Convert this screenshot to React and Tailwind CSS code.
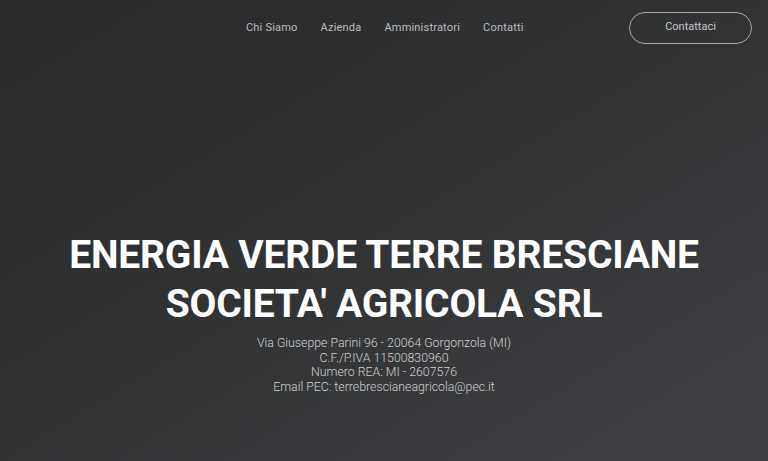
export default function App() {
  const links = ["Chi Siamo", "Azienda", "Amministratori", "Contatti"];

  return (
    <div
      className="flex h-[461px] w-[768px] flex-col overflow-hidden bg-gradient-to-br from-[#28292b] via-[#323335] to-[#404144] text-white"
      style={{ fontFamily: "Roboto, 'Liberation Sans', sans-serif" }}
    >
      <header className="flex h-[55px] items-center pl-[246px] pr-4">
        <nav className="flex gap-[23px] text-[11px] tracking-[0.2px] text-[#bdbdbd]">
          {links.map((link) => (
            <a key={link} href="#" className="leading-none">
              {link}
            </a>
          ))}
        </nav>
        <button
          type="button"
          className="ml-auto flex h-[32px] w-[123px] items-center justify-center rounded-full border border-[#a9a9a9] text-[11px] text-[#c4c4c4]"
        >
          Contattaci
        </button>
      </header>

      <main className="flex flex-1 flex-col items-center pt-[176px]">
        <h1 className="text-center text-[39px] font-bold leading-[49px] tracking-[-0.2px] text-white">
          ENERGIA VERDE TERRE BRESCIANE
          <br />
          SOCIETA' AGRICOLA SRL
        </h1>
        <div className="mt-[7px] text-center text-[12.3px] font-light leading-[14.5px] text-[#d0d0d0]">
          <p>Via Giuseppe Parini 96 - 20064 Gorgonzola (MI)</p>
          <p>C.F./P.IVA 11500830960</p>
          <p>Numero REA: MI - 2607576</p>
          <p>Email PEC: terrebrescianeagricola@pec.it</p>
        </div>
      </main>
    </div>
  );
}
